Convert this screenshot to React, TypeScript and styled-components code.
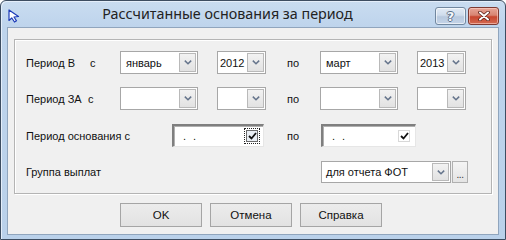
import React from "react";
import styled, { createGlobalStyle } from "styled-components";

const Global = createGlobalStyle`
  html, body { margin: 0; padding: 0; background: #ffffff; }
  * { box-sizing: border-box; }
`;

const UI_FONT = `"Liberation Sans", Arial, sans-serif`;

const Window = styled.div`
  width: 506px;
  height: 240px;
  display: flex;
  flex-direction: column;
  border: 1px solid #3d4d61;
  border-radius: 6px 6px 0 0;
  background: linear-gradient(#c9dcf0 0px, #bed4ec 26px, #bad1ea 100%);
  padding: 0 6px 4px 6px;
  box-shadow: inset 1px 1px 0 #e4eefa;
`;

const TitleBar = styled.div`
  height: 26px;
  display: flex;
  align-items: flex-start;
`;

const WindowIcon = styled.svg`
  width: 12px;
  height: 14px;
  margin: 8px 0 0 1px;
  flex: none;
`;

const Title = styled.div`
  flex: 1;
  text-align: center;
  font-family: "Noto Sans", "Open Sans", sans-serif;
  font-size: 14.3px;
  line-height: 20px;
  padding-top: 3px;
  color: #222222;
  white-space: nowrap;
`;

const CaptionButtons = styled.div`
  display: flex;
  gap: 2px;
  margin-top: 6px;
  flex: none;
`;

const CaptionButton = styled.div<{ $close?: boolean }>`
  width: 31px;
  height: 18px;
  border: 1px solid ${(p) => (p.$close ? "#7d3a33" : "#71879f")};
  border-radius: 3px;
  display: flex;
  align-items: center;
  justify-content: center;
  background: ${(p) =>
    p.$close
      ? "linear-gradient(#e6a597 0%, #d88472 45%, #c8462f 55%, #d36a52 100%)"
      : "linear-gradient(#e2ebf5 0%, #cfdcec 45%, #b8c9de 55%, #c4d4e8 100%)"};
  box-shadow: inset 0 0 0 1px ${(p) => (p.$close ? "rgba(255,210,200,0.6)" : "rgba(255,255,255,0.6)")};
`;

const HelpGlyph = styled.span`
  font-family: "DejaVu Sans", sans-serif;
  font-weight: bold;
  font-size: 13px;
  line-height: 13px;
  color: #f4f7fb;
  text-shadow: 1px 0 0 #5b6f88, -1px 0 0 #5b6f88, 0 1px 0 #5b6f88, 0 -1px 0 #5b6f88;
`;

const Client = styled.div`
  flex: 1;
  background: #f0f0f0;
  border: 1px solid #90a5bd;
  padding: 11px 6px 0 6px;
  display: flex;
  flex-direction: column;
`;

const GroupBox = styled.div`
  border: 1px solid #b4b4b4;
  box-shadow: inset 1px 1px 0 #ffffff, 1px 1px 0 #ffffff;
  padding: 11px 0 10px 11px;
  display: flex;
  flex-direction: column;
`;

const Row = styled.div<{ $mt?: number; $h?: number }>`
  display: flex;
  align-items: center;
  height: ${(p) => p.$h ?? 23}px;
  margin-top: ${(p) => p.$mt ?? 0}px;
`;

const Label = styled.div<{ $w: number; $pl?: number }>`
  width: ${(p) => p.$w}px;
  padding-left: ${(p) => p.$pl ?? 0}px;
  flex: none;
  font-family: ${UI_FONT};
  font-size: 11px;
  color: #111;
  white-space: nowrap;
`;

const Spacer = styled.div<{ $w: number }>`
  width: ${(p) => p.$w}px;
  flex: none;
`;

const ComboBox = styled.div<{ $w: number }>`
  width: ${(p) => p.$w}px;
  height: 100%;
  flex: none;
  display: flex;
  background: #ffffff;
  border: 1px solid #a7a7a7;
`;

const ComboValue = styled.div<{ $pl?: number }>`
  flex: 1;
  min-width: 0;
  padding-left: ${(p) => p.$pl ?? 5}px;
  display: flex;
  align-items: center;
  font-family: ${UI_FONT};
  font-size: 11px;
  color: #111;
  white-space: nowrap;
  overflow: hidden;
`;

const DropButton = styled.div`
  width: 17px;
  flex: none;
  margin: 1px;
  border: 1px solid #b9b9b9;
  background: linear-gradient(#f2f2f2, #e2e2e2);
  display: flex;
  align-items: center;
  justify-content: center;
`;

const DateField = styled.div<{ $w: number }>`
  width: ${(p) => p.$w}px;
  height: 100%;
  flex: none;
  display: flex;
  align-items: center;
  background: #ffffff;
  border-style: solid;
  border-width: 2px 1px 1px 2px;
  border-color: #7f7f7f #e6e6e6 #e6e6e6 #7f7f7f;
  box-shadow: inset 1px 1px 0 #b0b0b0;
  padding-right: 3px;
`;

const DateText = styled.div`
  flex: 1;
  padding-left: 9px;
  font-family: ${UI_FONT};
  font-size: 11px;
  letter-spacing: 2px;
  color: #111;
  white-space: pre;
`;

const FocusRect = styled.div<{ $focus?: boolean }>`
  padding: 1px;
  border: 1px ${(p) => (p.$focus ? "dotted #222" : "solid transparent")};
  display: flex;
`;

const CheckBox = styled.div<{ $strong?: boolean }>`
  width: 12px;
  height: 12px;
  border: 1px solid ${(p) => (p.$strong ? "#6a6a6a" : "#d8d8d8")};
  background: ${(p) => (p.$strong ? "#e9eef4" : "#ffffff")};
  display: flex;
  align-items: center;
  justify-content: center;
`;

const EllipsisButton = styled.div`
  width: 16px;
  height: 100%;
  flex: none;
  margin-left: 1px;
  border: 1px solid #b0b0b0;
  background: linear-gradient(#f4f4f4, #e4e4e4);
  display: flex;
  align-items: flex-end;
  justify-content: center;
  padding-bottom: 3px;
  font-family: ${UI_FONT};
  font-size: 10px;
  line-height: 8px;
  color: #333;
  letter-spacing: -0.5px;
`;

const ButtonRow = styled.div`
  display: flex;
  gap: 8px;
  padding-left: 106px;
  margin-top: 9px;
`;

const PushButton = styled.button`
  width: 82px;
  height: 24px;
  border: 1px solid #a5a5a5;
  background: linear-gradient(#ececec, #e2e2e2);
  font-family: ${UI_FONT};
  font-size: 11.5px;
  color: #111;
  padding: 0;
`;

const Chevron = () => (
  <svg width="8" height="5" viewBox="0 0 8 5">
    <path d="M0.8 0.6 L4 3.8 L7.2 0.6" fill="none" stroke="#66758c" strokeWidth="1.5" />
  </svg>
);

const Check = () => (
  <svg width="9" height="8" viewBox="0 0 9 8">
    <path d="M1 4 L3.5 6.5 L8 1" fill="none" stroke="#111" strokeWidth="1.8" />
  </svg>
);

type ComboProps = { w: number; value?: string; pl?: number };
const Combo = ({ w, value = "", pl }: ComboProps) => (
  <ComboBox $w={w}>
    <ComboValue $pl={pl}>{value}</ComboValue>
    <DropButton>
      <Chevron />
    </DropButton>
  </ComboBox>
);

export default function App() {
  return (
    <>
      <Global />
      <Window>
        <TitleBar>
          <WindowIcon viewBox="0 0 12 14">
            <path
              d="M1 1 L1 11.5 L3.8 9 L6.5 13 L8.5 11.8 L6 8 L10.5 7.5 Z"
              fill="#ffffff"
              stroke="#1d3bb8"
              strokeWidth="1.2"
              strokeLinejoin="round"
            />
          </WindowIcon>
          <Title>Рассчитанные основания за период</Title>
          <CaptionButtons>
            <CaptionButton>
              <HelpGlyph>?</HelpGlyph>
            </CaptionButton>
            <CaptionButton $close>
              <svg width="12" height="10" viewBox="0 0 12 10">
                <path d="M2 1.5 L10 8.5 M10 1.5 L2 8.5" stroke="#5a1f18" strokeWidth="3.6" strokeLinecap="round" />
                <path d="M2 1.5 L10 8.5 M10 1.5 L2 8.5" stroke="#ffffff" strokeWidth="2" strokeLinecap="round" />
              </svg>
            </CaptionButton>
          </CaptionButtons>
        </TitleBar>
        <Client>
          <GroupBox>
            <Row>
              <Label $w={64}>Период В</Label>
              <Label $w={30}>с</Label>
              <Combo w={78} value="январь" />
              <Spacer $w={19} />
              <Combo w={49} value="2012" pl={2} />
              <Label $w={54} $pl={21}>по</Label>
              <Combo w={78} value="март" />
              <Spacer $w={19} />
              <Combo w={49} value="2013" pl={2} />
            </Row>
            <Row $mt={13}>
              <Label $w={62}>Период ЗА</Label>
              <Label $w={32}>с</Label>
              <Combo w={78} />
              <Spacer $w={19} />
              <Combo w={49} />
              <Label $w={54} $pl={21}>по</Label>
              <Combo w={78} />
              <Spacer $w={19} />
              <Combo w={49} />
            </Row>
            <Row $mt={14}>
              <Label $w={146}>Период основания с</Label>
              <DateField $w={92}>
                <DateText>{". ."}</DateText>
                <FocusRect $focus>
                  <CheckBox $strong>
                    <Check />
                  </CheckBox>
                </FocusRect>
              </DateField>
              <Label $w={57} $pl={23}>по</Label>
              <DateField $w={95}>
                <DateText>{". ."}</DateText>
                <FocusRect>
                  <CheckBox>
                    <Check />
                  </CheckBox>
                </FocusRect>
              </DateField>
            </Row>
            <Row $mt={14} $h={22}>
              <Label $w={295}>Группа выплат</Label>
              <Combo w={130} value="для отчета ФОТ" pl={4} />
              <EllipsisButton>...</EllipsisButton>
            </Row>
          </GroupBox>
          <ButtonRow>
            <PushButton>OK</PushButton>
            <PushButton>Отмена</PushButton>
            <PushButton>Справка</PushButton>
          </ButtonRow>
        </Client>
      </Window>
    </>
  );
}
